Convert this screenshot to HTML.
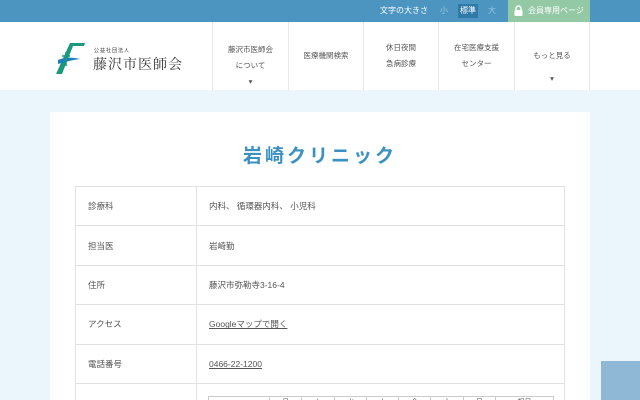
<!DOCTYPE html>
<html><head><meta charset="utf-8"><style>
*{margin:0;padding:0;box-sizing:border-box}
html,body{width:640px;height:400px;overflow:hidden}
body{background:#eaf5fc;font-family:"Liberation Sans","Noto Sans CJK JP",sans-serif;color:#555;position:relative}
.top{position:absolute;left:0;top:0;width:640px;height:22px;background:#4b95c0}
.top .lbl{position:absolute;left:380px;top:5px;font-size:8px;color:#fff}
.sz{position:absolute;top:4px;height:14px;font-size:8px;line-height:14px;text-align:center;width:18px;color:#9cc6df}
.member{position:absolute;left:508px;top:0;width:82px;height:22px;background:#93c9a5;color:#fff;font-size:8px;line-height:22px;padding-left:20px}
.hdr{position:absolute;left:0;top:22px;width:640px;height:68px;background:#fff}
.nav{position:absolute;top:22px;height:68px;border-left:1px solid #e8e8e8;font-size:7.5px;color:#555;text-align:center;line-height:16px}
.card{position:absolute;left:50px;top:112px;width:540px;height:288px;background:#fff}
h1{position:absolute;left:50px;width:540px;top:141px;text-align:center;font-size:19px;letter-spacing:3px;color:#3b90c2;font-weight:bold}
.wrap{position:absolute;left:75px;top:186px;width:490px;height:214px;overflow:hidden}
table.m{width:490px;border-collapse:collapse}
table.m td{border:1px solid #e2e2e2;height:39.4px;font-size:8.5px;padding-left:12px;color:#555}
table.m td.k{width:121px}
a{color:#555;text-decoration:underline}
.up{position:absolute;left:601px;top:361px;width:39px;height:39px;background:#8fb8d6}
.in{border-collapse:collapse;margin-left:-1px;width:346px}
.in td{border:1px solid #ccc!important;height:20px!important;padding:0!important;font-size:7px!important;text-align:center;vertical-align:top}
</style></head><body>
<div class="top">
<span class="lbl">文字の大きさ</span>
<span class="sz" style="left:435px">小</span>
<span class="sz" style="left:458px;background:#2f7aa8;color:#fff;width:20px">標準</span>
<span class="sz" style="left:483px">大</span>
<div class="member"><svg style="position:absolute;left:6px;top:5px" width="9" height="11"><path d="M2 5V3.5a2.5 2.5 0 0 1 5 0V5" stroke="#fff" stroke-width="1.4" fill="none"/><rect x="0.5" y="5" width="8" height="6" rx="1" fill="#fff"/></svg>会員専用ページ</div>
</div>
<div class="hdr">
<svg style="position:absolute;left:54px;top:20px" width="32" height="34"><path d="M16 1h15l-1 3h-11L8 32H2z" fill="#1a9a7a"/><path d="M4 18c6-3 14-3 22-1c-8 1-15 3-22 5z" fill="#1f7fb8"/><path d="M12 10v14M8 14h8" stroke="#1a9a7a" stroke-width="1.5"/></svg>
<div style="position:absolute;left:94px;top:25px;font-size:5px;color:#333;letter-spacing:1px">公益社団法人</div>
<div style="position:absolute;left:93px;top:32px;font-family:'Liberation Serif','Noto Serif CJK SC',serif;font-size:14px;color:#333;letter-spacing:1px">藤沢市医師会</div>
</div>
<div class="nav" style="left:212px;width:76px;padding-top:20px">藤沢市医師会<br>について<br>▾</div>
<div class="nav" style="left:288px;width:75px;padding-top:26px">医療機関検索</div>
<div class="nav" style="left:363px;width:75px;padding-top:18px">休日夜間<br>急病診療</div>
<div class="nav" style="left:438px;width:76px;padding-top:18px">在宅医療支援<br>センター<br></div>
<div class="nav" style="left:514px;width:76px;padding-top:26px;border-right:1px solid #e8e8e8">もっと見る<br><span style="line-height:30px">▾</span></div>
<div class="card"></div>
<h1>岩崎クリニック</h1>
<div class="wrap">
<table class="m">
<tr><td class="k">診療科</td><td>内科、 循環器内科、 小児科</td></tr>
<tr><td class="k">担当医</td><td>岩崎勤</td></tr>
<tr><td class="k">住所</td><td>藤沢市弥勒寺3-16-4</td></tr>
<tr><td class="k">アクセス</td><td><a>Googleマップで開く</a></td></tr>
<tr><td class="k">電話番号</td><td><a>0466-22-1200</a></td></tr>
<tr><td class="k" style="height:60px"></td><td style="vertical-align:top;padding-top:12px">
<table class="in"><tr><td style="width:61px"></td><td>月</td><td>火</td><td>水</td><td>木</td><td>金</td><td>土</td><td>日</td><td style="width:58px">祝日</td></tr></table>
</td></tr>
</table>
</div>
<div class="up"></div>
</body></html>
